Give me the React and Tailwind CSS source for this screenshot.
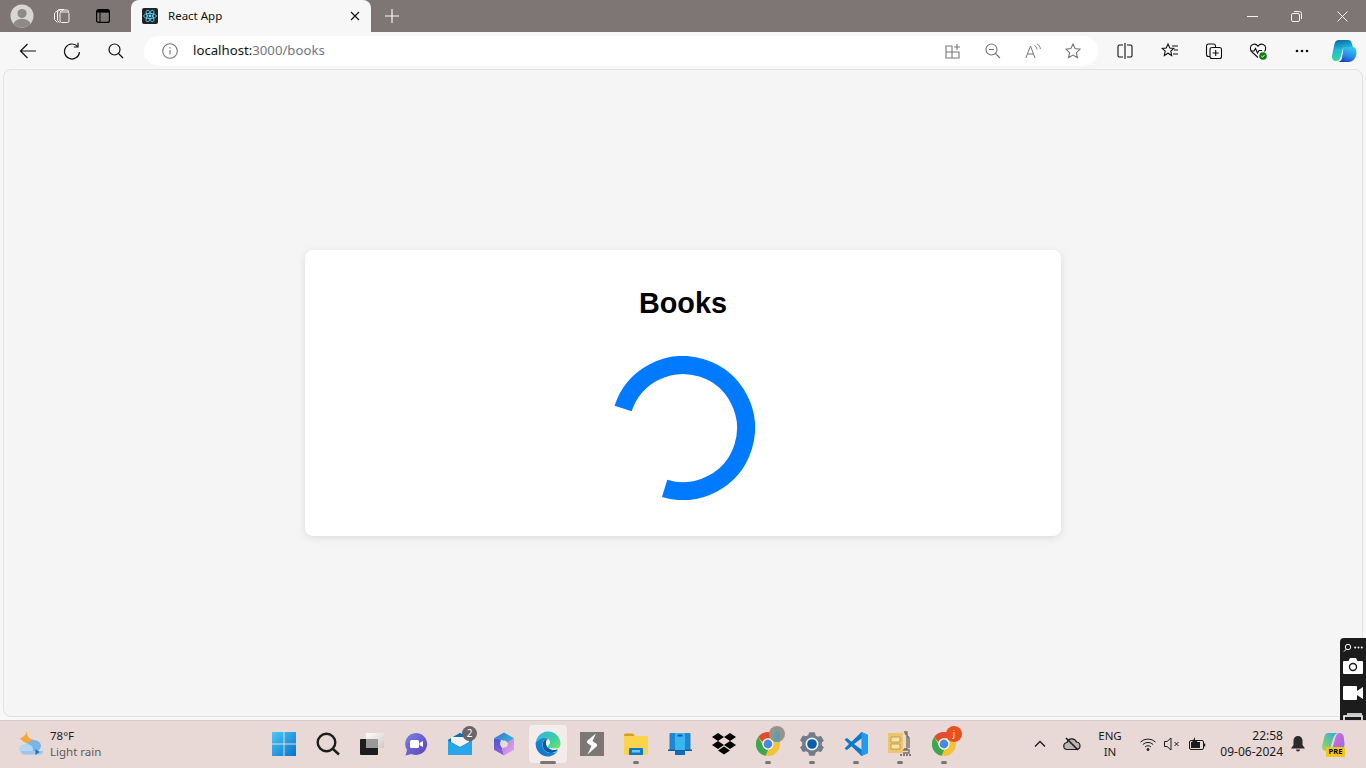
import React from "react";

const S = ({ size = 20, vb = 20, className = "", children, fill = "none", stroke = "currentColor", sw = 1.2 }) => (
  <svg width={size} height={size} viewBox={`0 0 ${vb} ${vb}`} fill={fill} stroke={stroke} strokeWidth={sw} className={className}>
    {children}
  </svg>
);

const Profile = () => (
  <svg width="24" height="24" viewBox="0 0 24 24">
    <defs><clipPath id="pc"><circle cx="12" cy="12" r="11.5" /></clipPath></defs>
    <circle cx="12" cy="12" r="11.5" fill="#d8d6d5" />
    <g clipPath="url(#pc)" fill="#8f8a88">
      <circle cx="12" cy="9.5" r="4.6" />
      <ellipse cx="12" cy="20.5" rx="8.5" ry="5.8" />
    </g>
  </svg>
);

const TabsIcon = () => (
  <S size={18} vb={18} stroke="#f4f2f1" sw={1}>
    <path d="M2 5.500 6 2.500M1.500 6v6.500l3 3M6 2.500l3.500 0M4.500 4.500 8 2.500h3M4.500 4.500v9l2 2" />
    <rect x="7" y="5" width="9" height="10.500" rx="1.600" />
    <path d="M7 5 10 3h4.500L16 5" />
  </S>
);

const VerticalTabs = () => (
  <svg width="14" height="14" viewBox="0 0 14 14">
    <rect x=".6" y=".6" width="12.800" height="12.800" rx="2" fill="none" stroke="#000" strokeWidth="1.200" />
    <rect x="1" y="1" width="12" height="2.600" fill="#000" />
    <path d="M4 3.500v9.500" stroke="#000" strokeWidth="1" />
  </svg>
);

const ReactLogo = () => (
  <svg width="16" height="16" viewBox="0 0 16 16" className="rounded-[2px]">
    <rect width="16" height="16" fill="#20232a" />
    <g fill="none" stroke="#61dafb" strokeWidth=".8">
      <ellipse cx="8" cy="8" rx="6.400" ry="2.600" />
      <ellipse cx="8" cy="8" rx="6.400" ry="2.600" transform="rotate(60 8 8)" />
      <ellipse cx="8" cy="8" rx="6.400" ry="2.600" transform="rotate(120 8 8)" />
    </g>
    <circle cx="8" cy="8" r="1.400" fill="#61dafb" />
  </svg>
);

const Tab = () => (
  <div className="relative ml-[10px] flex h-8 w-[240px] items-center rounded-t-[8px] bg-[#f7f7f7] pl-[11px] pr-[8px]">
    <ReactLogo />
    <span className="ml-[10px] text-[11.500px] text-[#111]">React App</span>
    <span className="ml-auto flex w-[16px] justify-center">
      <S size={10} vb={10} stroke="#111" sw={1.200}><path d="M1 1l8 8M9 1 1 9" /></S>
    </span>
  </div>
);

const TitleBar = () => (
  <div className="flex h-8 shrink-0 items-center bg-[#7d7674]">
    <div className="flex w-[44px] justify-center"><Profile /></div>
    <div className="flex w-[36px] justify-center"><TabsIcon /></div>
    <div className="ml-[5px] flex w-[36px] justify-center"><VerticalTabs /></div>
    <Tab />
    <div className="ml-[13px] flex w-[16px] justify-center">
      <S size={16} vb={16} stroke="#f7f7f7" sw={1.200}><path d="M8 1v14M1 8h14" /></S>
    </div>
    <div className="ml-auto flex items-center text-[#f4f2f1]">
      <div className="flex w-[44px] justify-center"><S size={11} vb={11} sw={1}><path d="M0 5.500h11" /></S></div>
      <div className="flex w-[44px] justify-center">
        <S size={11} vb={11} sw={1}><rect x=".5" y="2.500" width="8" height="8" rx="1.500" /><path d="M3 .5h5.500a2 2 0 0 1 2 2V8" /></S>
      </div>
      <div className="ml-[2px] flex w-[44px] justify-center"><S size={11} vb={11} sw={1}><path d="M.5.5l10 10M10.500.5l-10 10" /></S></div>
      <div className="w-[2px]" />
    </div>
  </div>
);

const Btn = ({ children, w = "w-[44px]" }) => <div className={`flex ${w} shrink-0 justify-center`}>{children}</div>;

const AddressBar = () => (
  <div className="ml-[6px] flex h-[30px] w-[954px] shrink-0 items-center rounded-full bg-white pl-[18px] text-[#707070]">
    <S size={16} vb={16} stroke="#777" sw={1.100}>
      <circle cx="8" cy="8" r="7.300" />
      <path d="M8 7v4.500" /><path d="M8 4.200v1.300" strokeWidth="1.300" />
    </S>
    <span className="ml-[15px] text-[13.200px] text-[#73777c]"><span className="text-[#111]">localhost:</span>3000/books</span>
    <div className="ml-auto flex items-center pr-[5px]">
      <Btn w="w-[40px]">
        <S size={16} vb={16} stroke="#777" sw={1.100}><path d="M1 3h6v12H1zM1 9h13v6H7M7 9V3M12 1v6M9 4h6" /></S>
      </Btn>
      <Btn w="w-[40px]">
        <S size={16} vb={16} stroke="#777" sw={1.100}><circle cx="6.500" cy="6.500" r="5.500" /><path d="M10.500 10.500 15 15M4 6.500h5" /></S>
      </Btn>
      <Btn w="w-[40px]">
        <S size={16} vb={16} stroke="#777" sw={1}><path d="M.8 15 5.500 3l4.500 12M2.500 11h6M9.500 2.500c1.500.8 2.300 2.200 2.400 4M12 1c2 1 3.200 3 3.400 5" /></S>
      </Btn>
      <Btn w="w-[40px]">
        <S size={16} vb={16} stroke="#777" sw={1.100}><path d="M8 1l2.100 4.600 5 .6-3.700 3.400 1 5L8 12.100l-4.400 2.500 1-5L.9 6.200l5-.6z" /></S>
      </Btn>
    </div>
  </div>
);

const Copilot = () => (
  <svg width="26" height="24" viewBox="0 0 26 24">
    <defs>
      <linearGradient id="ca" x1="0.300" y1="0" x2="0.500" y2="1"><stop offset="0" stopColor="#0b6aa8" /><stop offset=".45" stopColor="#22b8d8" /><stop offset="1" stopColor="#3ddc9a" /></linearGradient>
      <linearGradient id="cb" x1="0.700" y1="0" x2="0.300" y2="1"><stop offset="0" stopColor="#35c8ee" /><stop offset=".55" stopColor="#2a8fe8" /><stop offset="1" stopColor="#1a3fc0" /></linearGradient>
    </defs>
    <path d="M8 1h9.500c1.500 0 2.600 1 3 2.500L22 8H15c-2 0-3 1-3.500 3l-2 7.500C8.800 21 7.500 22 5 22 2 22 .5 19.500 1 16.500L3.500 5C4 2.500 5.500 1 8 1z" fill="url(#ca)" />
    <path d="M13 8h8.500c2.500 0 3.800 2 4 4.500.2 3.500-.8 6.500-3 8.500-1.300 1.200-3 2-5 2H7c2.500-.5 3.500-2 4-4l1-7c.2-2 .2-4 1-4z" fill="url(#cb)" />
  </svg>
);

const Toolbar = () => (
  <div className="flex h-[36px] shrink-0 items-center bg-[#f7f7f7] pl-[6px] pt-[2px] text-[#111]">
    <Btn><S size={18} vb={18} sw={1.200}><path d="M17 9H1.500M8.500 2 1.500 9l7 7" /></S></Btn>
    <Btn>
      <S size={18} vb={18} sw={1.200}><path d="M14.750 4.680A7.500 7.500 0 1 0 16.470 10.150" /><path d="M15 .8v4.200h-4.200" /></S>
    </Btn>
    <Btn><S size={16} vb={16} sw={1.200}><circle cx="6.500" cy="6.500" r="5.500" /><path d="M10.500 10.500 15 15" /></S></Btn>
    <AddressBar />
    <div className="ml-[5px] flex items-center">
      <Btn>
        <S size={16} vb={16} sw={1.100}><path d="M6 2H2.500A1.500 1.500 0 0 0 1 3.500v9A1.500 1.500 0 0 0 2.500 14H6M10 2h3.500A1.500 1.500 0 0 1 15 3.500v9a1.500 1.500 0 0 1-1.500 1.500H10M8 0v16" /></S>
      </Btn>
      <div className="ml-[1px] flex w-[44px] shrink-0 justify-center">
        <S size={18} vb={18} sw={1.100}><path d="M7 2l1.800 4 4 .4-3 2.800.9 4.300L7 11.200l-3.700 2.300.9-4.300-3-2.800 4-.4zM11 4h6M13 8h4M12 12h5" /></S>
      </div>
      <Btn>
        <S size={18} vb={18} sw={1.100}>
          <rect x="5" y="5.500" width="11.500" height="11" rx="2" />
          <path d="M10.700 8v6M7.700 11h6" />
          <path d="M5 14.500H3.500A2 2 0 0 1 1.500 12.500V4A2 2 0 0 1 3.500 2H8.500A2 2 0 0 1 10.500 4V5.500" />
        </S>
      </Btn>
      <Btn>
        <svg width="18" height="18" viewBox="0 0 18 18" fill="none" stroke="#111" strokeWidth="1.100">
          <path d="M9 15.500 3 10C.5 7.500 1 3.500 3.800 2.500 6 1.700 8 2.800 9 4.200c1-1.400 3-2.500 5.200-1.700C17 3.500 17.500 7 15.500 9.500" />
          <path d="M1.500 9h3.500l1.500-2.500 2 4.500 1.500-2.500h3" />
          <circle cx="14" cy="14" r="3.800" fill="#107c10" stroke="none" />
          <path d="M12.300 14l1.200 1.200 2.200-2.400" stroke="#fff" strokeWidth="1" />
        </svg>
      </Btn>
      <Btn>
        <svg width="14" height="4" viewBox="0 0 14 4" fill="#111"><circle cx="2" cy="2" r="1.300" /><circle cx="7" cy="2" r="1.300" /><circle cx="12" cy="2" r="1.300" /></svg>
      </Btn>
      <div className="flex w-[40px] justify-center"><Copilot /></div>
    </div>
  </div>
);

const Spinner = () => (
  <svg width="144" height="144" viewBox="0 0 144 144" className="mx-auto block">
    <path d="M12.100 52.500A63 63 0 1 1 53.600 132.300" fill="none" stroke="#007bff" strokeWidth="18" />
  </svg>
);

const Windows = () => (
  <svg width="24" height="24" viewBox="0 0 24 24">
    <defs><linearGradient id="w" x1="0" y1="0" x2="1" y2="1"><stop offset="0" stopColor="#4cc8f8" /><stop offset="1" stopColor="#0673c9" /></linearGradient></defs>
    <path d="M0 0h11.500v11.500H0zM12.500 0H24v11.500H12.500zM0 12.500h11.500V24H0zM12.500 12.500H24V24H12.500z" fill="url(#w)" />
  </svg>
);
const SearchTb = () => (
  <S size={24} vb={24} stroke="#1d1d1d" sw={2.400}><circle cx="10.500" cy="10.500" r="8.800" /><path d="M17 17l6 5.500" /></S>
);
const TaskView = () => (
  <svg width="24" height="22" viewBox="0 0 24 22">
    <defs><linearGradient id="tv" x1="0" y1="0" x2="1" y2="1"><stop offset="0" stopColor="#fff" /><stop offset="1" stopColor="#cfc9c8" /></linearGradient></defs>
    <rect x="6" y="0" width="18" height="15" fill="url(#tv)" rx="1" />
    <rect x="0" y="6" width="18" height="16" fill="#1c1c1c" rx="1" />
    <rect x="6" y="6" width="12" height="9" fill="#9c9897" />
  </svg>
);
const Meet = () => (
  <svg width="24" height="24" viewBox="0 0 24 24">
    <defs><linearGradient id="m" x1="0" y1="0" x2="1" y2="1"><stop offset="0" stopColor="#7b83eb" /><stop offset="1" stopColor="#5a3fb5" /></linearGradient></defs>
    <path d="M12 1a11 11 0 1 1-4.500 21L1.500 23.500 3 18A11 11 0 0 1 12 1z" fill="url(#m)" />
    <rect x="6" y="8" width="9" height="8" rx="1.500" fill="#fff" />
    <path d="M15.500 11l3.500-2v6l-3.500-2z" fill="#fff" />
  </svg>
);
const Mail = () => (
  <div className="relative flex h-[24px] w-[24px] items-center justify-center">
    <svg width="24" height="22" viewBox="0 0 24 22">
      <path d="M0 7 12 0l12 7v15H0z" fill="#1493df" />
      <path d="M0 7 12 0l12 7-12 7z" fill="#0b6cb8" />
      <path d="M3 4h18v5l-9 5-9-5z" fill="#f3f3f3" />
      <path d="M0 8l12 7 12-7v14H0z" fill="#27a7ea" />
    </svg>
    <span className="absolute right-[-5px] top-[-6px] flex h-[15px] w-[15px] items-center justify-center rounded-full bg-[#6a6665] text-[10px] text-white">2</span>
  </div>
);
const M365 = () => (
  <svg width="22" height="24" viewBox="0 0 22 24">
    <defs>
      <linearGradient id="ms1" x1="0" y1="0" x2="1" y2="0.600"><stop offset="0" stopColor="#3a6fd8" /><stop offset="1" stopColor="#34b0d8" /></linearGradient>
      <linearGradient id="ms2" x1="0" y1="0" x2="0" y2="1"><stop offset="0" stopColor="#3d5fd0" /><stop offset="1" stopColor="#9a5ad8" /></linearGradient>
      <linearGradient id="ms3" x1="0" y1="0" x2="1" y2="1"><stop offset="0" stopColor="#b878e0" /><stop offset="1" stopColor="#e0a8e8" /></linearGradient>
    </defs>
    <path d="M11 .5l10 5.700L14 11 8 7.500 1 6.200z" fill="url(#ms1)" />
    <path d="M1 6.200v11.600L11 23.500 9 16 7 12l1-4.500z" fill="url(#ms2)" />
    <path d="M21 6.200v11.600L11 23.500 9 16l5-1.500 1-4z" fill="url(#ms3)" />
    <circle cx="11" cy="12" r="3.600" fill="#eadad7" />
  </svg>
);
const Edge = () => (
  <svg width="26" height="26" viewBox="0 0 26 26">
    <defs>
      <linearGradient id="e2" x1="0" y1="1" x2="1" y2="0"><stop offset="0" stopColor="#0f6ec4" /><stop offset="1" stopColor="#1b9de2" /></linearGradient>
      <linearGradient id="e3" x1="0" y1="0" x2="1" y2="1"><stop offset="0" stopColor="#2ab4ee" /><stop offset=".6" stopColor="#3fcf9f" /><stop offset="1" stopColor="#76e860" /></linearGradient>
    </defs>
    <path d="M13 .5C20 .5 25.500 6 25.500 13c0 2.500-1.500 4.500-4.500 4.500H15c-3 0-2.500-3-1-4 1.500-1.200 1-4-1-5.500C9 5 3 7.500 .6 12 1.500 5.500 6.500.5 13 .5z" fill="url(#e3)" />
    <path d="M.6 12C3 7.500 9 5 13 8c-2.500-.5-5 1.500-5.500 5-.5 4.500 3.500 9 8.500 9 3 0 5.500-1 7-2.500-2 3.500-6 6-10 6C6 25.500.5 20 .6 12z" fill="url(#e2)" />
    <path d="M13 8c2 1.500 2.500 4.300 1 5.500-1.500 1-2 4 1 4h6C23 22 19 22 16 22c-5 0-9-4.500-8.500-9 .5-3.500 3-5.500 5.500-5z" fill="#eef4f6" />
    <path d="M16 22c-5 0-9-4.500-8.500-9 .5-3.500 3-5.500 5.500-5-1.700.5-2.500 3-2 5 .8 3.500 4 6 8 6 1.500 0 3-.3 4-.8-1.500 2.600-4 3.800-7 3.800z" fill="#0c59a4" />
  </svg>
);
const Sumatra = () => (
  <svg width="24" height="24" viewBox="0 0 24 24">
    <rect width="24" height="24" fill="#7d7674" />
    <path d="M16 1.500 8 8c-1.500 1.300-1.500 2.500 0 3.500l3.500 2.500L7.500 22.500l8.500-7.500c1.500-1.300 1.500-2.500 0-3.500L12.500 9z" fill="#fff" />
  </svg>
);
const Explorer = () => (
  <svg width="24" height="22" viewBox="0 0 24 22">
    <path d="M0 2a1.500 1.500 0 0 1 1.500-1.500h7L11 3h11.500A1.500 1.500 0 0 1 24 4.500V8H0z" fill="#d9a01c" />
    <path d="M0 3h24v17.500a1.500 1.500 0 0 1-1.500 1.500h-21A1.500 1.500 0 0 1 0 20.500z" fill="#fcd34d" />
    <path d="M0 3h8l2-0.500V1h0" fill="#d9a01c" />
    <path d="M5 16a1 1 0 0 1 1-1h12a1 1 0 0 1 1 1v6H5z" fill="#0e7ac4" />
    <rect x="8" y="17" width="8" height="2.500" fill="#6fc3ef" />
  </svg>
);
const Store = () => (
  <svg width="24" height="24" viewBox="0 0 24 24">
    <path d="M2.500 1h19a1 1 0 0 1 1 1v16h-21V2a1 1 0 0 1 1-1z" fill="#1f86d4" />
    <path d="M0 17.500h24v1.500H0z" fill="#0c5ea5" />
    <rect x="7" y="1" width="10" height="17" fill="#38b6f0" />
    <rect x="9.500" y="2.500" width="5" height="2" rx=".5" fill="#0d5a9e" />
    <path d="M7 19h10v4H7z" fill="#0f6cbd" />
  </svg>
);
const Dropbox = () => (
  <svg width="24" height="22" viewBox="0 0 24 22" fill="#000">
    <path d="M6 0l6 4-6 4-6-4zM18 0l6 4-6 4-6-4zM0 12l6-4 6 4-6 4zM12 12l6-4 6 4-6 4zM6 17.500l6-4 6 4-6 4z" />
  </svg>
);
const Chrome = () => (
  <svg width="24" height="24" viewBox="0 0 24 24">
    <circle cx="12" cy="12" r="12" fill="#f2c335" />
    <path d="M12 0a12 12 0 0 1 10.400 6H12a6 6 0 0 0-5.600 3.800L2.200 5A12 12 0 0 1 12 0z" fill="#e04a3a" />
    <path d="M2.200 5 7 13.500a6 6 0 0 0 5 4.500l-2.500 5.800A12 12 0 0 1 2.200 5z" fill="#3aa757" />
    <circle cx="12" cy="12" r="5.600" fill="#fff" />
    <circle cx="12" cy="12" r="4.400" fill="#4a88e8" />
  </svg>
);
const Gear = () => (
  <svg width="24" height="24" viewBox="0 0 24 24">
    <path d="M9.500.8h5l.8 3 2.600 1.500 3-.9 2.500 4.300-2.200 2.100v2.400l2.200 2.100-2.500 4.300-3-.9-2.600 1.500-.8 3h-5l-.8-3-2.600-1.500-3 .9-2.500-4.300 2.200-2.100v-2.400L.6 8.200l2.500-4.300 3 .9 2.600-1.500z" fill="#6f7d8a" stroke="#6f7d8a" strokeLinejoin="round" />
    <circle cx="12" cy="12" r="6.500" fill="#eef0f2" />
    <circle cx="12" cy="12" r="4.800" fill="#0b5ea8" />
  </svg>
);
const VSCode = () => (
  <svg width="24" height="24" viewBox="0 0 24 24">
    <path d="M17.500 0 24 3v18l-6.500 3-10-9.700L3 18 .5 16.500 5 12 .5 7.500 3 6l4.500 3.700z" fill="#0a7acb" />
    <path d="M17.500 0 24 3v18l-6.500 3z" fill="#1f9cf0" />
    <path d="M17.500 6.500v11L10 12z" fill="#e9d9d6" />
  </svg>
);
const WinRar = () => (
  <svg width="24" height="26" viewBox="0 0 24 26">
    <rect x="0" y="2" width="15" height="20" fill="#edc56a" />
    <path d="M3 6h9v5H3zM3 13h9v5H3z" fill="#f7e3a8" stroke="#a88c44" strokeWidth=".7" />
    <path d="M16 1h3v17h-3M15 19h6v3h-6M17 2l4 5v10" fill="none" stroke="#77706c" strokeWidth="1.400" />
    <path d="M12 24h12" stroke="#5f5a57" strokeWidth="1.400" strokeDasharray="2 1" />
  </svg>
);

const Item = ({ children, dot, active }) => (
  <div className="relative flex h-[48px] w-[44px] shrink-0 items-center justify-center">
    {active && <div className="absolute left-[3px] top-[5px] h-[38px] w-[38px] rounded-[4px] bg-[#f4ecea]" />}
    <div className="relative">{children}</div>
    {dot && <div className={`absolute bottom-[4px] left-1/2 h-[3px] -translate-x-1/2 rounded-full bg-[#787574] ${active ? "w-[16px]" : "w-[6px]"}`} />}
  </div>
);

const Weather = () => (
  <div className="flex w-[262px] shrink-0 items-center pl-[18px]">
    <svg width="26" height="26" viewBox="0 0 26 26">
      <path d="M9 .5C8.500 5 11.500 8.500 16 8.500 14.500 13 9 13.500 6 11 4 9.500 3 8 1.500 7.500 4 7 7 5 9 .5z" fill="#f2a93b" />
      <ellipse cx="16" cy="15" rx="7" ry="6" fill="#79b4e8" />
      <ellipse cx="8" cy="18" rx="7" ry="5" fill="#b7d6f2" />
      <path d="M3 20h22a3 3 0 0 1-3 3.500H6A3 3 0 0 1 3 20z" fill="#9fc5ea" />
      <path d="M17.500 18v6l4-3z" fill="#1570c8" />
    </svg>
    <div className="ml-[6px] flex flex-col text-[11.500px] leading-[16px]">
      <span className="text-[#1c1c1c]">78°F</span>
      <span className="text-[#5d5b5a]">Light rain</span>
    </div>
  </div>
);

const Tray = () => (
  <div className="ml-auto flex items-center text-[#1c1c1c]">
    <div className="flex w-[20px] justify-center">
      <S size={12} vb={12} sw={1.400}><path d="M1 8.500l5-5 5 5" /></S>
    </div>
    <div className="ml-[12px] flex w-[20px] justify-center">
      <svg width="18" height="14" viewBox="0 0 18 14" fill="#bdb4b2" stroke="#1c1c1c" strokeWidth="1.200">
        <path d="M4.500 12.500A3.500 3.500 0 0 1 4 5.500 5 5 0 0 1 13.500 5a3.800 3.800 0 0 1 .5 7.500z" />
        <path d="M3 1l12 12" strokeWidth="1.600" />
      </svg>
    </div>
    <div className="ml-[15px] flex w-[26px] flex-col items-center text-[11.500px] leading-[16px]">
      <span>ENG</span>
      <span>IN</span>
    </div>
    <div className="ml-[16px] flex w-[18px] justify-center">
      <S size={16} vb={16} sw={1}><path d="M.5 6a11 11 0 0 1 15 0M2.800 8.500a7.500 7.500 0 0 1 10.400 0M5 11a4.200 4.200 0 0 1 6 0" /><circle cx="8" cy="13.500" r="1" fill="currentColor" /></S>
    </div>
    <div className="ml-[6px] flex w-[18px] justify-center">
      <S size={16} vb={16} sw={1}><path d="M.5 5.500h2.500L7 2v12L3 10.500H.5zM10.500 6l4 4M14.500 6l-4 4" /></S>
    </div>
    <div className="ml-[6px] flex w-[20px] justify-center">
      <svg width="17" height="14" viewBox="0 0 17 14" fill="none" stroke="#1c1c1c">
        <rect x=".5" y="3.500" width="14" height="9" rx="1.500" />
        <path d="M15.500 6.500v3" strokeWidth="1.500" />
        <rect x="2" y="5" width="9" height="6" fill="#1c1c1c" stroke="none" />
        <path d="M6 0 2.500 6h3l-1 4 4-6H6z" fill="#1c1c1c" stroke="none" />
      </svg>
    </div>
    <div className="ml-[5px] flex w-[71px] flex-col items-end text-[12px] leading-[16px]">
      <span>22:58</span>
      <span>09-06-2024</span>
    </div>
    <div className="ml-[7px] flex w-[16px] justify-center">
      <svg width="14" height="16" viewBox="0 0 14 16" fill="#2c2a2a"><path d="M7 0a4.500 4.500 0 0 1 4.500 4.500V9L14 12.500H0L2.500 9V4.500A4.500 4.500 0 0 1 7 0zM5 13.500h4a2 2 0 0 1-4 0z" /></svg>
    </div>
    <div className="relative ml-[15px] mr-[21px] flex h-[24px] w-[24px]">
      <svg width="24" height="20" viewBox="0 0 24 20">
        <defs>
          <linearGradient id="pa" x1="0" y1="1" x2="1" y2="0"><stop offset="0" stopColor="#9adf4f" /><stop offset="1" stopColor="#2aa5e8" /></linearGradient>
          <linearGradient id="pb" x1="0" y1="0" x2="1" y2="1"><stop offset="0" stopColor="#e86bd8" /><stop offset="1" stopColor="#8f6be8" /></linearGradient>
        </defs>
        <path d="M7 1h10c-3 .5-4 3-5 6L10 14c-.7 3-2 5-5 5C2 19 .5 16 1.300 13l2-8C4 2.500 5 1 7 1z" fill="url(#pa)" />
        <path d="M19 1c2 .3 3.500 2 3.800 4l.7 7c.2 3-1.800 6-5 6.500L7 19c3-.4 4-2 5-5l2-7c.8-3 2-6 5-6z" fill="url(#pb)" />
      </svg>
      <span className="absolute bottom-[-1px] left-[5px] flex h-[10px] w-[19px] items-center justify-center rounded-[1px] bg-[#f5c518] text-[7.500px] font-bold leading-none text-black">PRE</span>
    </div>
  </div>
);

const Taskbar = () => (
  <div className="flex h-[48px] shrink-0 items-center bg-[#e9d9d6] shadow-[inset_0_1px_0_#d6cdcb]">
    <Weather />
    <div className="flex items-center">
      <Item><Windows /></Item>
      <Item><SearchTb /></Item>
      <Item><TaskView /></Item>
      <Item><Meet /></Item>
      <Item><Mail /></Item>
      <Item><M365 /></Item>
      <Item active dot><Edge /></Item>
      <Item><Sumatra /></Item>
      <Item dot><Explorer /></Item>
      <Item><Store /></Item>
      <Item><Dropbox /></Item>
      <Item dot>
        <Chrome />
        <span className="absolute right-[-5px] top-[-6px] flex h-[16px] w-[16px] items-end justify-center overflow-hidden rounded-full bg-[#9a928c]">
          <span className="h-[11px] w-[6px] rounded-t-full bg-[#5fa0a8]" />
        </span>
      </Item>
      <Item dot><Gear /></Item>
      <Item dot><VSCode /></Item>
      <Item dot><WinRar /></Item>
      <Item dot>
        <Chrome />
        <span className="absolute right-[-6px] top-[-6px] flex h-[16px] w-[16px] items-center justify-center rounded-full bg-[#ec4f1f] text-[9px] text-white">j</span>
      </Item>
    </div>
    <Tray />
  </div>
);

const SidePanel = () => (
  <div className="absolute bottom-[48px] right-0 flex h-[82px] w-[26px] flex-col items-center overflow-hidden rounded-tl-[4px] bg-[#1c1c1c] pt-[5px] text-white">
    <div className="flex items-center gap-[2px]">
      <svg width="9" height="9" viewBox="0 0 9 9" fill="none" stroke="#fff"><circle cx="5" cy="4" r="2.700" /><path d="M1 8.500 3.500 6" /></svg>
      <svg width="9" height="3" viewBox="0 0 9 3" fill="#fff"><circle cx="1.200" cy="1.500" r="1" /><circle cx="4.500" cy="1.500" r="1" /><circle cx="7.800" cy="1.500" r="1" /></svg>
    </div>
    <svg width="20" height="16" viewBox="0 0 20 16" className="mt-[6px] shrink-0">
      <path d="M1 3h4.500L7 0h6l1.500 3H19a1 1 0 0 1 1 1v11a1 1 0 0 1-1 1H1a1 1 0 0 1-1-1V4a1 1 0 0 1 1-1z" fill="#fff" />
      <circle cx="10" cy="9" r="3.500" fill="#fff" stroke="#1c1c1c" strokeWidth="1.400" />
    </svg>
    <svg width="20" height="14" viewBox="0 0 20 14" fill="#fff" className="mt-[12px] shrink-0">
      <rect width="14" height="14" rx="1" /><path d="M14 5l6-4v12l-6-4z" />
    </svg>
    <svg width="20" height="14" viewBox="0 0 20 14" fill="none" stroke="#fff" strokeWidth="1.600" className="mt-[13px] shrink-0">
      <rect x="1" y="3" width="18" height="14" /><path d="M4 1h15" />
    </svg>
  </div>
);

export default function App() {
  return (
    <div className="relative flex h-screen w-full flex-col overflow-hidden bg-[#f7f7f7] font-['Noto_Sans','Open_Sans',sans-serif]">
      <TitleBar />
      <Toolbar />
      <main className="mx-[3px] mt-[1px] flex min-h-0 flex-1 items-center justify-center rounded-[8px] border border-[#e2e2e2] bg-[#f5f5f5]">
        <div className="w-[756px] rounded-[8px] bg-white px-5 pb-[36px] pt-[32px] font-['Liberation_Sans',Arial,sans-serif] shadow-[0_2px_8px_rgba(0,0,0,0.1)]">
          <h1 className="mb-[32px] text-center text-[28.800px] font-bold leading-[42px] text-black">Books</h1>
          <Spinner />
        </div>
      </main>
      <div className="h-[3px] shrink-0 bg-[#f7f7f7]" />
      <Taskbar />
      <SidePanel />
    </div>
  );
}
